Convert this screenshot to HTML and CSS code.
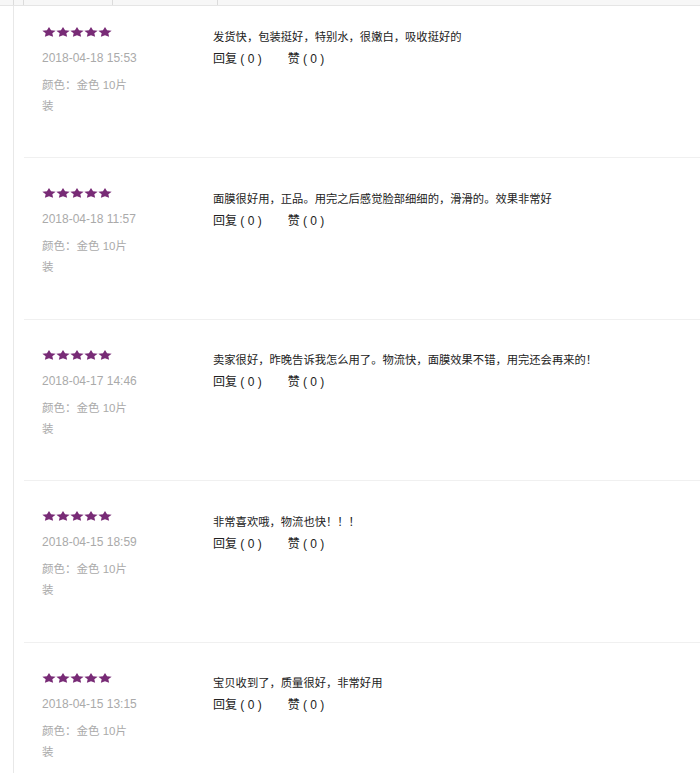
FILE: index.html
```html
<!DOCTYPE html>
<html lang="zh-CN">
<head>
    <meta charset="UTF-8">
    <meta name="viewport" content="width=device-width, initial-scale=1.0">
    <title>商品评价</title>
    <link rel="stylesheet" href="styles.css">
</head>
<body>
    <svg class="defs" width="0" height="0">
        <symbol id="star" viewBox="0 0 100 92" preserveAspectRatio="none">
            <polygon points="50,0 64.7,29.8 97.6,34.5 73.8,57.7 79.4,90.5 50,75 20.6,90.5 26.2,57.7 2.4,34.5 35.3,29.8"/>
        </symbol>
    </svg>

    <div class="tabs">
        <span class="tab t1"></span>
        <span class="tab t2"></span>
        <span class="tab t3"></span>
        <span class="tab t4"></span>
        <span class="tab t5"></span>
    </div>

    <div class="wrap">
        <ul class="comments">
            <li class="item">
                <div class="meta">
                    <svg class="stars" width="70" height="10"><use href="#star" width="14" height="10"/><use href="#star" x="14" width="14" height="10"/><use href="#star" x="28" width="14" height="10"/><use href="#star" x="42" width="14" height="10"/><use href="#star" x="56" width="14" height="10"/></svg>
                    <p class="date">2018-04-18 15:53</p>
                    <p class="sku">颜色：金色 10片装</p>
                </div>
                <div class="body">
                    <p class="text">发货快，包装挺好，特别水，很嫩白，吸收挺好的</p>
                    <p class="ops"><span>回复 ( 0 )</span><span class="like">赞 ( 0 )</span></p>
                </div>
            </li>
            <li class="item">
                <div class="meta">
                    <svg class="stars" width="70" height="10"><use href="#star" width="14" height="10"/><use href="#star" x="14" width="14" height="10"/><use href="#star" x="28" width="14" height="10"/><use href="#star" x="42" width="14" height="10"/><use href="#star" x="56" width="14" height="10"/></svg>
                    <p class="date">2018-04-18 11:57</p>
                    <p class="sku">颜色：金色 10片装</p>
                </div>
                <div class="body">
                    <p class="text">面膜很好用，正品。用完之后感觉脸部细细的，滑滑的。效果非常好</p>
                    <p class="ops"><span>回复 ( 0 )</span><span class="like">赞 ( 0 )</span></p>
                </div>
            </li>
            <li class="item">
                <div class="meta">
                    <svg class="stars" width="70" height="10"><use href="#star" width="14" height="10"/><use href="#star" x="14" width="14" height="10"/><use href="#star" x="28" width="14" height="10"/><use href="#star" x="42" width="14" height="10"/><use href="#star" x="56" width="14" height="10"/></svg>
                    <p class="date">2018-04-17 14:46</p>
                    <p class="sku">颜色：金色 10片装</p>
                </div>
                <div class="body">
                    <p class="text">卖家很好，昨晚告诉我怎么用了。物流快，面膜效果不错，用完还会再来的！</p>
                    <p class="ops"><span>回复 ( 0 )</span><span class="like">赞 ( 0 )</span></p>
                </div>
            </li>
            <li class="item">
                <div class="meta">
                    <svg class="stars" width="70" height="10"><use href="#star" width="14" height="10"/><use href="#star" x="14" width="14" height="10"/><use href="#star" x="28" width="14" height="10"/><use href="#star" x="42" width="14" height="10"/><use href="#star" x="56" width="14" height="10"/></svg>
                    <p class="date">2018-04-15 18:59</p>
                    <p class="sku">颜色：金色 10片装</p>
                </div>
                <div class="body">
                    <p class="text">非常喜欢哦，物流也快！！！</p>
                    <p class="ops"><span>回复 ( 0 )</span><span class="like">赞 ( 0 )</span></p>
                </div>
            </li>
            <li class="item">
                <div class="meta">
                    <svg class="stars" width="70" height="10"><use href="#star" width="14" height="10"/><use href="#star" x="14" width="14" height="10"/><use href="#star" x="28" width="14" height="10"/><use href="#star" x="42" width="14" height="10"/><use href="#star" x="56" width="14" height="10"/></svg>
                    <p class="date">2018-04-15 13:15</p>
                    <p class="sku">颜色：金色 10片装</p>
                </div>
                <div class="body">
                    <p class="text">宝贝收到了，质量很好，非常好用</p>
                    <p class="ops"><span>回复 ( 0 )</span><span class="like">赞 ( 0 )</span></p>
                </div>
            </li>
        </ul>
    </div>
</body>
</html>
```

FILE: styles.css
```css
body {
    margin: 0;
    background: #fff;
    font-family: "Liberation Sans", "Noto Sans CJK SC", sans-serif;
    color: #222;
}

.defs {
    display: block;
    width: 0;
    height: 0;
}

p {
    margin: 0;
}

.tabs {
    display: flex;
    height: 5px;
    background: #f7f7f7;
    border-bottom: 1px solid #e5e5e5;
}

.tab {
    border-right: 1px solid #dcdcdc;
}

.t1 { width: 13px; }
.t2 { width: 9px; }
.t3 { width: 88px; }
.t4 { width: 104px; }
.t5 { flex: 1; border-right: none; }

.wrap {
    margin-left: 13px;
    border-left: 1px solid #e8e8e8;
    padding-left: 10px;
}

.comments {
    list-style: none;
    margin: 0;
    padding: 0;
}

.item {
    display: flex;
    padding: 30px 0 40.5px 18px;
    border-bottom: 1px solid #f0f0f0;
}

.item:first-child {
    padding-top: 20.5px;
}

.meta {
    width: 171px;
    flex-shrink: 0;
}

.stars {
    display: block;
    fill: #782b76;
    margin-bottom: 11px;
}

.date {
    font-size: 12px;
    line-height: 21px;
    color: #aaa;
    margin-bottom: 6px;
}

.sku {
    width: 92px;
    font-size: 11.5px;
    line-height: 21px;
    color: #aaa;
}

.body {
    flex: 1;
    font-size: 11.3px;
    line-height: 21px;
    padding-top: 0.5px;
}

.ops {
    font-size: 12px;
    padding-top: 1px;
}

.like {
    margin-left: 26px;
}
```
